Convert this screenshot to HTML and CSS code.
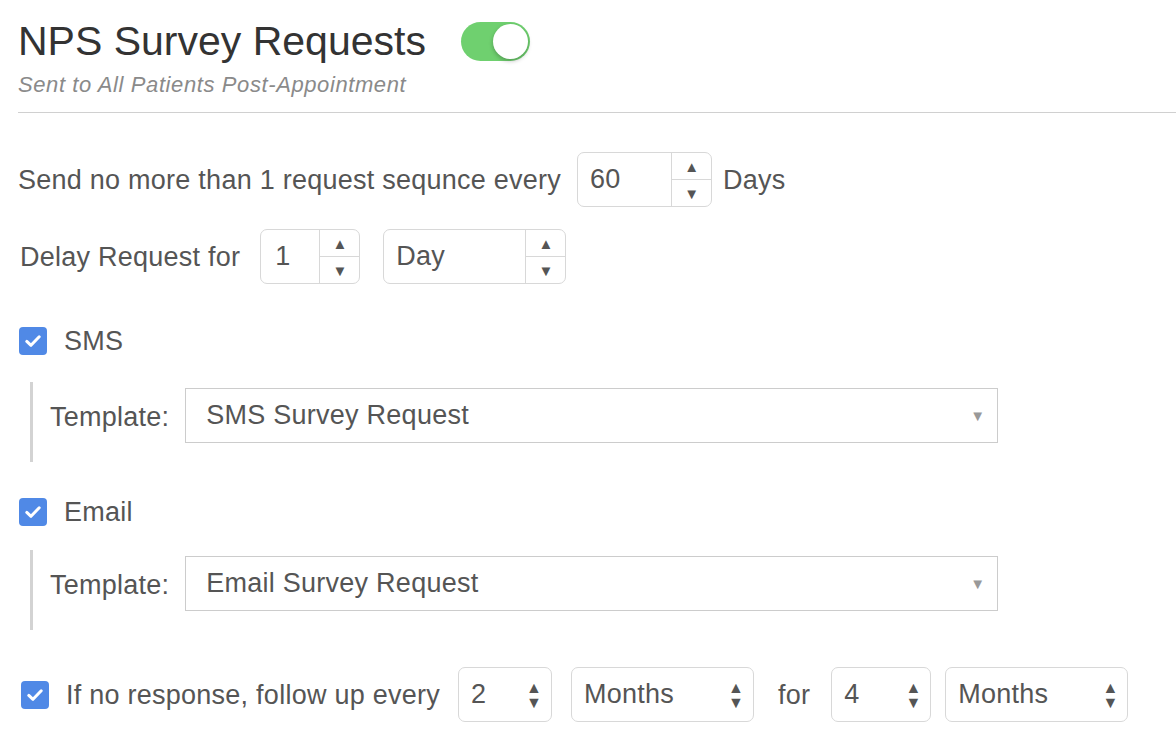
FILE: index.html
```html
<!DOCTYPE html>
<html>
<head>
    <title>NPS Survey Requests</title>
    <link rel="stylesheet" href="styles.css">
</head>
<body>
    <div class="page">
        <div class="header">
            <h1>NPS Survey Requests</h1>
            <div class="toggle"><div class="knob"></div></div>
        </div>
        <div class="subtitle">Sent to All Patients Post-Appointment</div>
        <div class="divider"></div>

        <div class="row row-first">
            <span class="label">Send no more than 1 request sequnce every</span>
            <div class="stepper w135">
                <span class="value">60</span>
                <div class="spin"><span>&#9650;</span><span>&#9660;</span></div>
            </div>
            <span class="label days">Days</span>
        </div>

        <div class="row row-second">
            <span class="label delay">Delay Request for</span>
            <div class="stepper w100">
                <span class="value v1">1</span>
                <div class="spin"><span>&#9650;</span><span>&#9660;</span></div>
            </div>
            <div class="stepper w183">
                <span class="value">Day</span>
                <div class="spin"><span>&#9650;</span><span>&#9660;</span></div>
            </div>
        </div>

        <div class="option opt-sms">
            <div class="check"><svg width="16" height="12" viewBox="0 0 16 12"><path d="M1.8 6.4l4.2 3.9L14.2 1.8" fill="none" stroke="#fff" stroke-width="3" stroke-linecap="round" stroke-linejoin="round"/></svg></div>
            <span class="label">SMS</span>
        </div>
        <div class="branch branch-sms">
            <span class="label">Template:</span>
            <div class="template">
                <span>SMS Survey Request</span>
                <span class="caret">&#9660;</span>
            </div>
        </div>

        <div class="option opt-email">
            <div class="check"><svg width="16" height="12" viewBox="0 0 16 12"><path d="M1.8 6.4l4.2 3.9L14.2 1.8" fill="none" stroke="#fff" stroke-width="3" stroke-linecap="round" stroke-linejoin="round"/></svg></div>
            <span class="label">Email</span>
        </div>
        <div class="branch branch-email">
            <span class="label">Template:</span>
            <div class="template">
                <span>Email Survey Request</span>
                <span class="caret">&#9660;</span>
            </div>
        </div>

        <div class="row row-follow">
            <div class="check"><svg width="16" height="12" viewBox="0 0 16 12"><path d="M1.8 6.4l4.2 3.9L14.2 1.8" fill="none" stroke="#fff" stroke-width="3" stroke-linecap="round" stroke-linejoin="round"/></svg></div>
            <span class="label follow">If no response, follow up every</span>
            <div class="select w94">
                <span class="value">2</span>
                <div class="arrows"><span>&#9650;</span><span>&#9660;</span></div>
            </div>
            <div class="select w183">
                <span class="value">Months</span>
                <div class="arrows"><span>&#9650;</span><span>&#9660;</span></div>
            </div>
            <span class="label for">for</span>
            <div class="select w100 four">
                <span class="value">4</span>
                <div class="arrows"><span>&#9650;</span><span>&#9660;</span></div>
            </div>
            <div class="select w183">
                <span class="value">Months</span>
                <div class="arrows"><span>&#9650;</span><span>&#9660;</span></div>
            </div>
        </div>
    </div>
</body>
</html>
```

FILE: styles.css
```css
body{
    margin: 0;
    padding: 0;
    background-color: #fff;
    font-family: "Liberation Sans", Arial, sans-serif;
    color: #555;
}
.page{
    padding-left: 18px;
}
.header{
    display: flex;
    align-items: center;
    height: 40px;
    margin-top: 21px;
}
h1{
    margin: 0;
    font-size: 41px;
    font-weight: normal;
    line-height: 40px;
    color: #333;
}
.toggle{
    width: 69px;
    height: 39px;
    margin-left: 35px;
    border-radius: 20px;
    background-color: #6fd06f;
    display: flex;
    justify-content: flex-end;
    align-items: center;
}
.knob{
    width: 35px;
    height: 35px;
    margin-right: 2px;
    border-radius: 50%;
    background-color: #fff;
    box-shadow: 0 2px 4px rgba(0, 0, 0, 0.25);
}
.subtitle{
    margin-top: 12px;
    font-size: 22px;
    letter-spacing: 0.6px;
    line-height: 24px;
    font-style: italic;
    color: #8a8a8a;
}
.divider{
    margin-top: 15px;
    border-top: 1px solid #d0d0d0;
}
.label{
    font-size: 27px;
    line-height: 28px;
    letter-spacing: 0.25px;
    color: #555;
}
.row{
    display: flex;
    align-items: center;
}
.row-first{
    margin-top: 39px;
}
.row-second{
    margin-top: 22px;
}
.days{
    margin-left: 11px;
}
.delay{
    margin-left: 2px;
    margin-right: 20px;
}
.row-first .stepper{
    margin-left: 16px;
}
.stepper{
    height: 53px;
    border: 1px solid #d8d8d8;
    border-radius: 7px;
    display: flex;
    align-items: center;
    justify-content: space-between;
    box-sizing: content-box;
}
.row-second .w183{
    margin-left: 23px;
}
.w135{ width: 133px; }
.w100{ width: 98px; }
.w183{ width: 181px; }
.w94{ width: 92px; }
.value{
    padding-left: 12px;
    font-size: 27px;
    letter-spacing: 0.25px;
    color: #555;
}
.v1{
    padding-left: 14px;
}
.spin{
    width: 39px;
    height: 100%;
    border-left: 1px solid #d8d8d8;
    display: flex;
    flex-direction: column;
}
.spin span{
    flex: 1;
    display: flex;
    align-items: center;
    justify-content: center;
    font-size: 15px;
    color: #555;
}
.spin span:first-child{
    border-bottom: 1px solid #d8d8d8;
}
.option{
    display: flex;
    align-items: center;
    height: 28px;
    margin-left: 1px;
}
.opt-sms{
    margin-top: 43px;
}
.opt-email{
    margin-top: 36px;
}
.check{
    width: 28px;
    height: 28px;
    border-radius: 4px;
    background-color: #5089e6;
    display: flex;
    align-items: center;
    justify-content: center;
    margin-right: 17px;
}
.branch{
    display: flex;
    align-items: flex-start;
    margin-left: 12px;
    height: 80px;
    border-left: 3px solid #d3d3d3;
    padding-left: 17px;
    box-sizing: border-box;
}
.branch .label{
    margin-top: 18px;
    line-height: 34px;
    margin-right: 16px;
}
.branch-sms{
    margin-top: 27px;
}
.branch-email{
    margin-top: 24px;
}
.template{
    margin-top: 6px;
    height: 53px;
    border: 1px solid #ccc;
    display: flex;
    align-items: center;
    justify-content: space-between;
    padding: 0 12px 0 20px;
    box-sizing: content-box;
    width: 779px;
    font-size: 27px;
    letter-spacing: 0.25px;
    color: #555;
}
.caret{
    font-size: 15px;
    color: #999;
}
.row-follow{
    margin-top: 37px;
}
.row-follow .check{
    margin-left: 3px;
}
.follow{
    margin-right: 18px;
}
.select{
    height: 53px;
    border: 1px solid #d8d8d8;
    border-radius: 7px;
    display: flex;
    align-items: center;
    justify-content: space-between;
    margin-right: 19px;
}
.select.four{
    margin-right: 14px;
}
.row-follow .for{
    margin-left: 5px;
    margin-right: 21px;
}
.arrows{
    display: flex;
    flex-direction: column;
    align-items: center;
    margin-right: 9px;
    font-size: 16px;
    line-height: 15px;
    color: #555;
}
```
